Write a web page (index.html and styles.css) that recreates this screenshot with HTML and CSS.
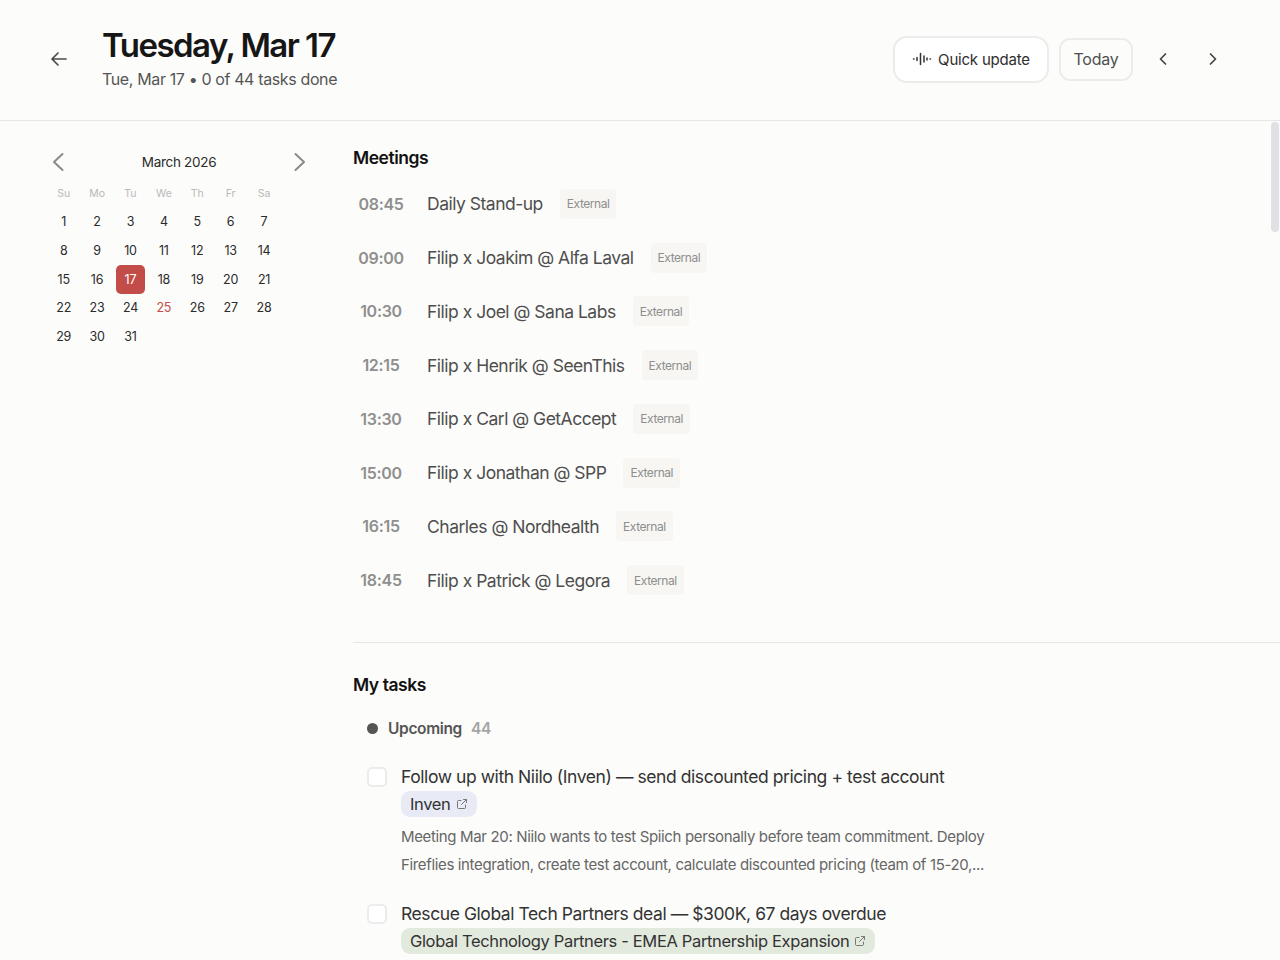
FILE: index.html
```html
<!DOCTYPE html>
<html lang="en">
<head>
  <meta charset="UTF-8" />
  <title>Tuesday, Mar 17</title>
  <link rel="stylesheet" href="styles.css">
</head>
<body>
  <header class="top">
    <button class="back" aria-label="Back">
      <svg width="20" height="20" viewBox="0 0 20 20" fill="none" stroke="#4a4a4a" stroke-width="1.7" stroke-linecap="round" stroke-linejoin="round"><path d="M17 10H3M9 4l-6 6 6 6"/></svg>
    </button>
    <div class="title-block">
      <h1>Tuesday, Mar 17</h1>
      <p>Tue, Mar 17 • 0 of 44 tasks done</p>
    </div>
    <div class="actions">
      <button class="quick">
        <svg width="20" height="14" viewBox="0 0 20 14" fill="none" stroke="#333" stroke-width="1.5" stroke-linecap="round"><path d="M1.500 7h.5M5 5.500v3M8.500 1.500v11M12 4v6M15 6v2M18 7h.5"/></svg>
        Quick update
      </button>
      <button class="today">Today</button>
      <button class="arrow" aria-label="Previous">
        <svg width="12" height="14" viewBox="0 0 12 14" fill="none" stroke="#444" stroke-width="1.7" stroke-linecap="round" stroke-linejoin="round"><path d="M8.500 2l-5 5 5 5"/></svg>
      </button>
      <button class="arrow" aria-label="Next">
        <svg width="12" height="14" viewBox="0 0 12 14" fill="none" stroke="#444" stroke-width="1.7" stroke-linecap="round" stroke-linejoin="round"><path d="M3.500 2l5 5-5 5"/></svg>
      </button>
    </div>
  </header>

  <div class="layout">
    <aside class="side">
      <div class="cal-head">
        <svg width="14" height="20" viewBox="0 0 14 20" fill="none" stroke="#8a8a8a" stroke-width="2" stroke-linecap="round" stroke-linejoin="round"><path d="M11.500 2l-8.500 8 8.500 8"/></svg>
        <span>March 2026</span>
        <svg width="14" height="20" viewBox="0 0 14 20" fill="none" stroke="#8a8a8a" stroke-width="2" stroke-linecap="round" stroke-linejoin="round"><path d="M2.500 2l8.500 8-8.500 8"/></svg>
      </div>
      <div class="cal-grid">
        <div class="dow">Su</div><div class="dow">Mo</div><div class="dow">Tu</div><div class="dow">We</div><div class="dow">Th</div><div class="dow">Fr</div><div class="dow">Sa</div>
        <div class="day">1</div><div class="day">2</div><div class="day">3</div><div class="day">4</div><div class="day">5</div><div class="day">6</div><div class="day">7</div>
        <div class="day">8</div><div class="day">9</div><div class="day">10</div><div class="day">11</div><div class="day">12</div><div class="day">13</div><div class="day">14</div>
        <div class="day">15</div><div class="day">16</div><div class="day selected">17</div><div class="day">18</div><div class="day">19</div><div class="day">20</div><div class="day">21</div>
        <div class="day">22</div><div class="day">23</div><div class="day">24</div><div class="day red">25</div><div class="day">26</div><div class="day">27</div><div class="day">28</div>
        <div class="day">29</div><div class="day">30</div><div class="day">31</div>
      </div>
    </aside>

    <main class="content">
      <section class="meetings">
        <h2>Meetings</h2>
        <div class="meeting"><span class="time">08:45</span><span class="name">Daily Stand-up</span><span class="tag">External</span></div>
        <div class="meeting"><span class="time">09:00</span><span class="name">Filip x Joakim @ Alfa Laval</span><span class="tag">External</span></div>
        <div class="meeting"><span class="time">10:30</span><span class="name">Filip x Joel @ Sana Labs</span><span class="tag">External</span></div>
        <div class="meeting"><span class="time">12:15</span><span class="name">Filip x Henrik @ SeenThis</span><span class="tag">External</span></div>
        <div class="meeting"><span class="time">13:30</span><span class="name">Filip x Carl @ GetAccept</span><span class="tag">External</span></div>
        <div class="meeting"><span class="time">15:00</span><span class="name">Filip x Jonathan @ SPP</span><span class="tag">External</span></div>
        <div class="meeting"><span class="time">16:15</span><span class="name">Charles @ Nordhealth</span><span class="tag">External</span></div>
        <div class="meeting"><span class="time">18:45</span><span class="name">Filip x Patrick @ Legora</span><span class="tag">External</span></div>
      </section>

      <section class="tasks">
        <h2>My tasks</h2>
        <div class="group"><span class="dot"></span><strong>Upcoming</strong><span class="count">44</span></div>

        <div class="task">
          <span class="check"></span>
          <div class="task-body">
            <div class="task-title">Follow up with Niilo (Inven) — send discounted pricing + test account</div>
            <span class="chip chip-blue">Inven
              <svg width="12" height="12" viewBox="0 0 12 12" fill="none" stroke="#777" stroke-width="1" stroke-linecap="round" stroke-linejoin="round"><path d="M9.500 7v2.500a1 1 0 0 1-1 1h-6a1 1 0 0 1-1-1v-6a1 1 0 0 1 1-1H5M7.500 1.500h3v3M10.500 1.500L5.500 6.500"/></svg>
            </span>
            <p class="task-note">Meeting Mar 20: Niilo wants to test Spiich personally before team commitment. Deploy Fireflies integration, create test account, calculate discounted pricing (team of 15-20,...</p>
          </div>
        </div>

        <div class="task">
          <span class="check"></span>
          <div class="task-body">
            <div class="task-title">Rescue Global Tech Partners deal — $300K, 67 days overdue</div>
            <span class="chip chip-green">Global Technology Partners - EMEA Partnership Expansion
              <svg width="12" height="12" viewBox="0 0 12 12" fill="none" stroke="#777" stroke-width="1" stroke-linecap="round" stroke-linejoin="round"><path d="M9.500 7v2.500a1 1 0 0 1-1 1h-6a1 1 0 0 1-1-1v-6a1 1 0 0 1 1-1H5M7.500 1.500h3v3M10.500 1.500L5.500 6.500"/></svg>
            </span>
          </div>
        </div>
      </section>
    </main>
  </div>

  <div class="scrollbar"></div>
</body>
</html>
```

FILE: styles.css
```css
* {
  box-sizing: border-box;
}
html, body {
  height: 100%;
  overflow: hidden;
}
body {
  margin: 0;
  background: #fcfcfa;
  color: #1a1a1a;
  font-family: "Inter", "Liberation Sans", sans-serif;
  position: relative;
}
button {
  font-family: inherit;
  background: none;
  border: none;
  padding: 0;
  cursor: pointer;
}
h1, h2, p {
  margin: 0;
}

/* header */
.top {
  height: 121px;
  border-bottom: 1px solid #e6e6e8;
  display: flex;
  align-items: center;
  padding: 0 61px 0 49px;
}
.back {
  width: 20px;
  height: 20px;
  margin-right: 33px;
  display: flex;
  margin-top: -2px;
}
.title-block {
  margin-top: -4px;
}
.title-block h1 {
  font-size: 33px;
  line-height: 38px;
  font-weight: 600;
  letter-spacing: -1.55px;
  color: #161616;
}
.title-block p {
  margin-top: 3px;
  font-size: 16px;
  line-height: 24px;
  color: #555;
  letter-spacing: -0.37px;
}
.actions {
  margin-left: auto;
  display: flex;
  align-items: center;
  margin-top: -2px;
}
.quick {
  width: 156px;
  height: 47px;
  border: 2px solid #ececec;
  border-radius: 14px;
  background: #fff;
  display: flex;
  align-items: center;
  justify-content: center;
  gap: 6px;
  font-size: 15px;
  letter-spacing: -0.2px;
  color: #2e2e2e;
}
.today {
  width: 74px;
  height: 43px;
  margin-left: 10px;
  border: 2px solid #ececec;
  border-radius: 11px;
  font-size: 16px;
  letter-spacing: -0.2px;
  color: #4f4f4f;
}
.arrow {
  width: 12px;
  height: 14px;
  margin-left: 38px;
  display: flex;
}
.today + .arrow {
  margin-left: 24px;
}

/* layout */
.layout {
  display: flex;
}
.side {
  width: 353px;
  flex: none;
  padding: 30px 0 0 47px;
}
.content {
  flex: 1;
  padding-top: 25px;
}

/* calendar */
.cal-head {
  width: 260px;
  height: 22px;
  display: flex;
  align-items: center;
  justify-content: space-between;
  padding: 0 0 0 4px;
  font-size: 13.500px;
  letter-spacing: -0.3px;
  color: #2b2b2b;
}
.cal-grid {
  margin-top: 5px;
  display: grid;
  grid-template-columns: repeat(7, 33.400px);
  grid-template-rows: 29px;
  grid-auto-rows: 28.800px;
  align-items: center;
  justify-items: center;
}
.dow {
  font-size: 10.500px;
  color: #b9b9b9;
  line-height: 16px;
  padding-top: 8px;
  align-self: start;
}
.day {
  width: 29px;
  height: 29px;
  display: flex;
  align-items: center;
  justify-content: center;
  font-size: 12.500px;
  letter-spacing: -0.2px;
  color: #2b2b2b;
  border-radius: 5px;
}
.day.selected {
  background: #c24d48;
  color: #fff;
}
.day.red {
  color: #c24d48;
}

/* meetings */
h2 {
  font-size: 17.500px;
  line-height: 24px;
  font-weight: 600;
  letter-spacing: -0.45px;
  color: #111;
}
.meetings {
  height: 497px;
  border-bottom: 1px solid #e6e6e6;
}
.meetings h2 {
  margin-bottom: 7px;
}
.meeting {
  height: 53.750px;
  display: flex;
  align-items: center;
}
.time {
  width: 56px;
  flex: none;
  text-align: center;
  font-size: 16px;
  font-weight: 600;
  letter-spacing: -0.3px;
  color: #8f8f8f;
}
.name {
  margin-left: 18px;
  font-size: 17.500px;
  letter-spacing: -0.5px;
  color: #4e4e4e;
}
.tag {
  margin-left: 17px;
  height: 30px;
  padding: 0 7px;
  display: flex;
  align-items: center;
  background: #f7f6f3;
  border-radius: 4px;
  font-size: 12px;
  letter-spacing: -0.45px;
  color: #8e8e8e;
}

/* tasks */
.tasks {
  padding-top: 30px;
}
.group {
  margin: 19px 0 0 14px;
  height: 24px;
  display: flex;
  align-items: center;
  font-size: 15.500px;
  letter-spacing: -0.35px;
  color: #555;
}
.group strong {
  font-weight: 600;
}
.dot {
  width: 11px;
  height: 11px;
  border-radius: 50%;
  background: #555;
  margin-right: 10px;
}
.count {
  margin-left: 9px;
  font-weight: 600;
  color: #a5a5a5;
}
.task {
  display: flex;
  margin: 23px 0 0 14px;
}
.task + .task {
  margin-top: 21px;
}
.check {
  flex: none;
  width: 20px;
  height: 20px;
  margin-top: 4px;
  border: 2px solid #ececec;
  border-radius: 5px;
  background: #fff;
}
.task-body {
  margin-left: 14px;
  width: 600px;
}
.task-title {
  font-size: 17.500px;
  line-height: 28px;
  letter-spacing: -0.43px;
  color: #333;
}
.chip {
  display: inline-flex;
  align-items: center;
  gap: 5px;
  height: 26px;
  padding: 0 9px;
  border-radius: 9px;
  font-size: 16.500px;
  letter-spacing: -0.35px;
  color: #333;
}
.chip-blue {
  background: #e8ebf5;
}
.chip-green {
  background: #e2e9dd;
}
.task-note {
  margin-top: 6px;
  font-size: 15px;
  line-height: 28px;
  letter-spacing: -0.35px;
  color: #666;
}

.scrollbar {
  position: absolute;
  top: 122px;
  right: 1px;
  width: 8px;
  height: 110px;
  border-radius: 4px;
  background: #e0e1e4;
}
```
